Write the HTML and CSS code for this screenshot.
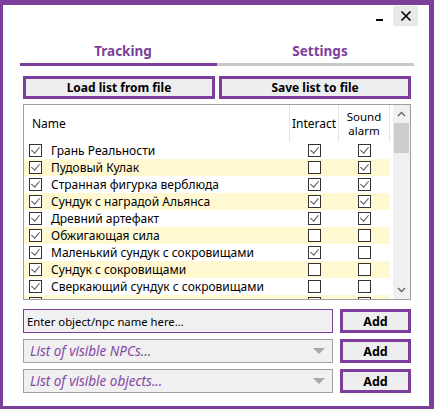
FILE: index.html
```html
<!DOCTYPE html>
<html>
<head>
<meta charset="utf-8">
<link rel="stylesheet" href="styles.css">
</head>
<body>
<div class="window">
  <div class="titlebar">
    <span class="min"></span>
    <span class="close">
      <svg width="12" height="12" viewBox="0 0 12 12"><path d="M1.5 1.5 L10.5 10.5 M10.5 1.5 L1.5 10.5" stroke="#000" stroke-width="1.6" fill="none"/></svg>
    </span>
  </div>
  <div class="tabs">
    <div class="tab active">Tracking</div>
    <div class="tab">Settings</div>
  </div>
  <div class="content">
    <div class="btnrow">
      <button class="pbtn">Load list from file</button>
      <button class="pbtn">Save list to file</button>
    </div>
    <div class="grid">
      <div class="list">
        <div class="head">
          <div class="hname">Name</div>
          <div class="hcol">Interact</div>
          <div class="hcol two"><span class="ln">Sound</span><span class="ln">alarm</span></div>
        </div>
        <div class="rows">
          <div class="row"><div class="name"><span class="cb on"></span>Грань Реальности</div><div class="c"><span class="cb on"></span></div><div class="c"><span class="cb on"></span></div></div>
          <div class="row alt"><div class="name"><span class="cb on"></span>Пудовый Кулак</div><div class="c"><span class="cb"></span></div><div class="c"><span class="cb on"></span></div></div>
          <div class="row"><div class="name"><span class="cb on"></span>Странная фигурка верблюда</div><div class="c"><span class="cb on"></span></div><div class="c"><span class="cb on"></span></div></div>
          <div class="row alt"><div class="name"><span class="cb on"></span>Сундук с наградой Альянса</div><div class="c"><span class="cb on"></span></div><div class="c"><span class="cb on"></span></div></div>
          <div class="row"><div class="name"><span class="cb on"></span>Древний артефакт</div><div class="c"><span class="cb on"></span></div><div class="c"><span class="cb on"></span></div></div>
          <div class="row alt"><div class="name"><span class="cb on"></span>Обжигающая сила</div><div class="c"><span class="cb"></span></div><div class="c"><span class="cb"></span></div></div>
          <div class="row"><div class="name"><span class="cb on"></span>Маленький сундук с сокровищами</div><div class="c"><span class="cb on"></span></div><div class="c"><span class="cb"></span></div></div>
          <div class="row alt"><div class="name"><span class="cb on"></span>Сундук с сокровищами</div><div class="c"><span class="cb"></span></div><div class="c"><span class="cb"></span></div></div>
          <div class="row"><div class="name"><span class="cb on"></span>Сверкающий сундук с сокровищами</div><div class="c"><span class="cb"></span></div><div class="c"><span class="cb"></span></div></div>
          <div class="row alt"><div class="name"><span class="cb on"></span>Сундук</div><div class="c"><span class="cb"></span></div><div class="c"><span class="cb"></span></div></div>
        </div>
      </div>
      <div class="scroll">
        <svg class="arr" width="9" height="6" viewBox="0 0 9 6"><path d="M1 5 L4.5 1.5 L8 5" stroke="#606060" stroke-width="1.3" fill="none"/></svg>
        <div class="track"><div class="thumb"></div></div>
        <svg class="arr" width="9" height="6" viewBox="0 0 9 6"><path d="M1 1 L4.5 4.5 L8 1" stroke="#606060" stroke-width="1.3" fill="none"/></svg>
      </div>
    </div>
    <div class="inrow first">
      <div class="field text">Enter object/npc name here...</div>
      <button class="pbtn add">Add</button>
    </div>
    <div class="inrow">
      <div class="field combo"><span>List of visible NPCs...</span><span class="tri"></span></div>
      <button class="pbtn add">Add</button>
    </div>
    <div class="inrow">
      <div class="field combo"><span>List of visible objects...</span><span class="tri"></span></div>
      <button class="pbtn add">Add</button>
    </div>
  </div>
</div>
</body>
</html>
```

FILE: styles.css
```css
html, body {
  margin: 0;
  padding: 0;
  width: 434px;
  height: 409px;
  overflow: hidden;
  background: #fff;
}
body {
  font-family: "Noto Sans", "Open Sans", sans-serif;
  font-size: 12px;
  color: #000;
}
.window {
  box-sizing: border-box;
  width: 434px;
  height: 409px;
  border-style: solid;
  border-color: #7b3f9b;
  border-width: 5px 5px 3px 3px;
  background: #fff;
  display: flex;
  flex-direction: column;
}
.titlebar {
  height: 25px;
  display: flex;
  justify-content: flex-end;
  align-items: flex-start;
  padding-right: 11px;
}
.min {
  width: 7px;
  height: 2px;
  background: #000;
  margin-top: 14px;
  margin-right: 10px;
}
.close {
  width: 25px;
  height: 20px;
  margin-top: 1px;
  background: #e8e8e8;
  display: flex;
  align-items: center;
  justify-content: center;
}
.tabs {
  display: flex;
  margin: 0 15px 0 17px;
}
.tab {
  flex: 1;
  height: 30px;
  display: flex;
  align-items: flex-end;
  justify-content: center;
  padding-bottom: 3px;
  padding-left: 9px;
  font-weight: bold;
  font-size: 13.5px;
  color: #7b3f9b;
  border-bottom: 3px solid #c8c8c8;
}
.tab.active {
  border-bottom-color: #7b3f9b;
}
.content {
  padding: 10px 18px 0 20px;
  display: flex;
  flex-direction: column;
}
.btnrow {
  display: flex;
  gap: 4px;
}
.pbtn {
  flex: 1;
  box-sizing: border-box;
  height: 23px;
  border: 3px solid #7b3f9b;
  background: #eeeeee;
  font-family: "Noto Sans", sans-serif;
  font-size: 12px;
  font-weight: bold;
  color: #000;
  padding: 0;
  display: flex;
  align-items: center;
  justify-content: center;
}
.grid {
  margin-top: 5px;
  box-sizing: border-box;
  height: 196px;
  border: 1px solid #a0a0a0;
  display: flex;
  overflow: hidden;
}
.list {
  width: 366px;
  margin-right: 3px;
  overflow: hidden;
}
.head {
  display: flex;
  height: 37px;
}
.hname {
  width: 266px;
  box-sizing: border-box;
  padding-left: 8px;
  display: flex;
  align-items: center;
  border-right: 1px solid #e5e5e5;
}
.hcol {
  width: 49px;
  box-sizing: border-box;
  display: flex;
  flex-direction: column;
  align-items: center;
  justify-content: center;
  text-align: center;
  border-right: 1px solid #e5e5e5;
}
.hcol.two {
  width: 51px;
}
.ln {
  display: block;
  line-height: 14px;
  height: 14px;
  font-size: 11.5px;
}
.row {
  display: flex;
  height: 17px;
  align-items: center;
}
.row.alt {
  background: #fff8d0;
}
.name {
  width: 266px;
  display: flex;
  align-items: center;
  white-space: nowrap;
  overflow: hidden;
}
.name .cb {
  margin: 0 9px 0 5px;
}
.c {
  width: 49px;
  display: flex;
  justify-content: center;
}
.c:last-child {
  width: 51px;
}
.cb {
  box-sizing: border-box;
  width: 13px;
  height: 13px;
  border: 1px solid #333;
  background: #fff;
  flex: none;
  position: relative;
}
.cb.on::after {
  content: "";
  position: absolute;
  left: 3px;
  top: 0px;
  width: 4px;
  height: 7px;
  border-right: 1.3px solid #555;
  border-bottom: 1.3px solid #555;
  transform: rotate(40deg);
}
.scroll {
  width: 17px;
  background: #f0f0f0;
  display: flex;
  flex-direction: column;
  align-items: center;
}
.arr {
  margin: 6px 0;
}
.track {
  flex: 1;
  width: 100%;
}
.thumb {
  margin: 0 1px;
  height: 30px;
  background: #cdcdcd;
}
.inrow {
  display: flex;
  gap: 7px;
  margin-top: 6px;
}
.inrow.first {
  margin-top: 9px;
}
.field {
  box-sizing: border-box;
  width: 310px;
  height: 24px;
  background: #f0f0f0;
  display: flex;
  align-items: center;
}
.field.text {
  border: 1px solid #7b3f9b;
  padding-left: 3px;
  font-size: 11.3px;
}
.field.combo {
  border: 1px solid #a0a0a0;
  padding-left: 6px;
  justify-content: space-between;
  font-style: italic;
  font-size: 13.5px;
  color: #8447a6;
}
.tri {
  width: 0;
  height: 0;
  border-left: 6px solid transparent;
  border-right: 6px solid transparent;
  border-top: 6px solid #a8a8a8;
  margin-right: 7px;
}
.pbtn.add {
  flex: none;
  width: 71px;
  height: 24px;
  font-size: 12.5px;
}
```
